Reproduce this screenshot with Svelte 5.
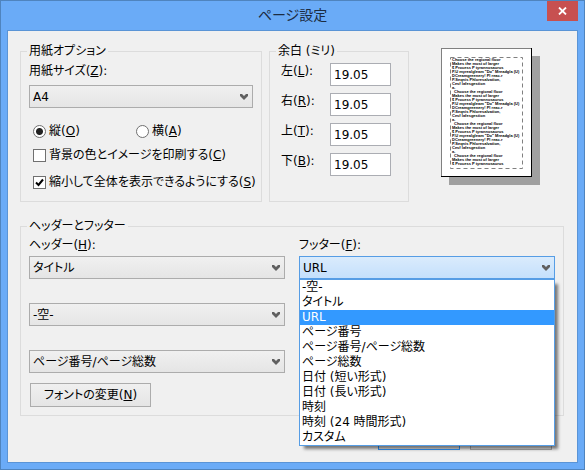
<script>
    let paper = $state('A4');
    let orientation = $state('portrait');
    let printBackground = $state(false);
    let shrinkToFit = $state(true);

    const parts = ['-空-', 'タイトル', 'URL', 'ページ番号', 'ページ番号/ページ総数', 'ページ総数',
        '日付 (短い形式)', '日付 (長い形式)', '時刻', '時刻 (24 時間形式)', 'カスタム'];

    let margins = $state([
        { id: 'left', name: '左', key: 'L', value: '19.05' },
        { id: 'right', name: '右', key: 'R', value: '19.05' },
        { id: 'top', name: '上', key: 'T', value: '19.05' },
        { id: 'bottom', name: '下', key: 'B', value: '19.05' }
    ]);

    let headers = $state(['タイトル', '-空-', 'ページ番号/ページ総数']);
    let footer = $state('URL');
    let footerOpen = $state(true);

    // dummy text of the page preview
    const sample = ['Choose the regional floor', 'Makes the most of larger', '$ Process P tyrannosaurus', 'P.U myrealgleam "Do" Mreadgla (U)',
        'DCreamgreenery! Pl reac.r', 'P.Seqnis Phloresalvation,', 'Cesf lafesgestion', 'a.'];
    const lines = Array.from({ length: 27 }, (_, i) => sample[i % 8]);

    function toggleFooter(e) {
        e.preventDefault();
        footerOpen = !footerOpen;
    }

    function pickFooter(part) {
        footer = part;
        footerOpen = false;
    }
</script>

<div class="window">
    <header class="titlebar">
        <h1>ページ設定</h1>
        <button class="close" aria-label="閉じる">
            <svg width="9" height="8" viewBox="0 0 9 8"><path d="M1 0.5L8 7.5M8 0.5L1 7.5" stroke="#fff" stroke-width="1.8" /></svg>
        </button>
    </header>

    <main class="client">
        <div class="top-row">
            <fieldset>
                <legend>用紙オプション</legend>
                <label class="caption" for="paper">用紙サイズ(<u>Z</u>):</label>
                <select id="paper" class="paper" bind:value={paper}>
                    <option>A4</option>
                </select>
                <div class="radios">
                    <label class="choice"><input type="radio" name="orientation" value="portrait" bind:group={orientation}><span>縦(<u>O</u>)</span></label>
                    <label class="choice"><input type="radio" name="orientation" value="landscape" bind:group={orientation}><span>横(<u>A</u>)</span></label>
                </div>
                <div class="checks">
                    <label class="choice"><input type="checkbox" bind:checked={printBackground}><span>背景の色とイメージを印刷する(<u>C</u>)</span></label>
                    <label class="choice"><input type="checkbox" bind:checked={shrinkToFit}><span>縮小して全体を表示できるようにする(<u>S</u>)</span></label>
                </div>
            </fieldset>

            <fieldset class="margins">
                <legend>余白 (ミリ)</legend>
                <div class="margin-grid">
                    {#each margins as m}
                        <label for={m.id}>{m.name}(<u>{m.key}</u>):</label>
                        <input id={m.id} type="text" bind:value={m.value}>
                    {/each}
                </div>
            </fieldset>

            <div class="preview">
                <svg width="99" height="137" viewBox="0 0 99 137">
                    <rect x="8" y="8" width="91" height="129" fill="#a0a0a0" />
                    <rect width="91" height="129" fill="#000" />
                    <rect width="90" height="128" fill="#808080" />
                    <rect x="1" y="1" width="89" height="127" fill="#fff" />
                    <rect x="9.5" y="9.5" width="72" height="111" fill="none" stroke="#808080" stroke-dasharray="4 3" />
                    {#each lines as line, i}
                        <text x={i > 0 && i % 8 === 0 ? 13 : 11} y={13 + i * 4}>{line}</text>
                    {/each}
                </svg>
            </div>
        </div>

        <fieldset class="header-footer">
            <legend>ヘッダーとフッター</legend>
            <div class="columns">
                <div class="column">
                    <label class="caption" for="header0">ヘッダー(<u>H</u>):</label>
                    <div class="stack">
                        {#each headers as header, i}
                            <select id="header{i}" aria-label={i > 0 ? 'ヘッダー' : undefined} bind:value={headers[i]}>
                                {#each parts as part}
                                    <option>{part}</option>
                                {/each}
                            </select>
                        {/each}
                    </div>
                    <button class="btn font-btn">フォントの変更(<u>N</u>)</button>
                </div>
                <div class="column">
                    <label class="caption" for="footer">フッター(<u>F</u>):</label>
                    <div class="dropdown">
                        <select id="footer" class:open={footerOpen} bind:value={footer} onmousedown={toggleFooter}>
                            {#each parts as part}
                                <option>{part}</option>
                            {/each}
                        </select>
                        {#if footerOpen}
                            <ul class="list" role="listbox" aria-label="フッター">
                                {#each parts as part}
                                    <li role="option" aria-selected={part === footer}>
                                        <button class:selected={part === footer} onclick={() => pickFooter(part)}>{part}</button>
                                    </li>
                                {/each}
                            </ul>
                        {/if}
                    </div>
                </div>
            </div>
        </fieldset>

        <div class="actions">
            <button class="btn default">OK</button>
            <button class="btn">キャンセル</button>
        </div>
    </main>
</div>

<style>
    :global(body) {
        margin: 0;
    }

    .window, .window button, .window input, .window select {
        font-family: "DejaVu Sans", "Noto Sans CJK JP", sans-serif;
        font-size: 12px;
        line-height: 16px;
        font-feature-settings: "palt";
        color: #000;
    }

    .window, .window * {
        box-sizing: border-box;
    }

    .window {
        display: flex;
        flex-direction: column;
        min-height: 100vh;
        padding: 0 6px 6px;
        border: 1px solid #4f84be;
        background: #6aabf7;
    }

    .titlebar {
        display: grid;
        grid-template-columns: 31px 1fr 31px;
        height: 29px;
    }

    h1 {
        grid-column: 2;
        margin: 0;
        font-size: 14px;
        font-weight: 400;
        line-height: 29px;
        text-align: center;
        color: #1c2c42;
    }

    .close {
        display: flex;
        align-items: center;
        justify-content: center;
        height: 20px;
        padding: 0;
        border: none;
        background: #c75050;
    }

    .client {
        flex: 1;
        padding: 12px 13px 12px 12px;
        border: 1px solid #5a94d6;
        background: #f0f0f0;
    }

    .top-row {
        display: grid;
        grid-template-columns: 1fr 140px 148px;
        gap: 7px;
    }

    fieldset {
        min-width: 0;
        margin: 0;
        padding: 4px 8px 11px;
        border: 1px solid #dcdcdc;
    }

    legend {
        margin-left: -2px;
        padding: 0 2px;
    }

    .caption {
        display: block;
        white-space: nowrap;
    }

    select {
        display: block;
        width: 100%;
        height: 23px;
        padding: 0 20px 0 3px;
        border: 1px solid #acacac;
        border-radius: 0;
        outline: none;
        appearance: none;
        background: url("data:image/svg+xml,%3Csvg xmlns='http://www.w3.org/2000/svg' width='8' height='6'%3E%3Cpath d='M0 0h2l2 2 2-2h2v2L4 6 0 2z' fill='%23606060'/%3E%3C/svg%3E") no-repeat right 4px center, linear-gradient(#f0f0f0, #e5e5e5);
    }

    select.open {
        border-color: #569de5;
        background: url("data:image/svg+xml,%3Csvg xmlns='http://www.w3.org/2000/svg' width='8' height='6'%3E%3Cpath d='M0 0h2l2 2 2-2h2v2L4 6 0 2z' fill='%23606060'/%3E%3C/svg%3E") no-repeat right 4px center, linear-gradient(#daebfc, #c4e0fc);
    }

    .paper {
        margin-top: 6px;
    }

    .radios {
        display: grid;
        grid-template-columns: 103px 1fr;
        margin: 15px 0 8px 4px;
    }

    .checks {
        display: grid;
        gap: 11px;
        margin-left: 4px;
    }

    .choice {
        display: flex;
        align-items: center;
        gap: 3px;
        white-space: nowrap;
    }

    .choice input {
        flex: none;
        width: 13px;
        height: 13px;
        margin: 0;
        border: 1px solid #707070;
        appearance: none;
        background: #fff;
    }

    .choice input[type="radio"] {
        border-radius: 50%;
    }

    .choice input[type="radio"]:checked {
        background: radial-gradient(circle, #222 3px, #fff 4px);
    }

    .choice input[type="checkbox"]:checked {
        background: #fff url("data:image/svg+xml,%3Csvg xmlns='http://www.w3.org/2000/svg' width='9' height='9'%3E%3Cpath d='M1 4.5L3.5 7 8 1.5' fill='none' stroke='%23000' stroke-width='2'/%3E%3C/svg%3E") no-repeat center;
    }

    .margins {
        padding: 4px 17px 8px 11px;
    }

    .margins legend {
        margin-left: -5px;
    }

    .margin-grid {
        display: grid;
        grid-template-columns: 1fr 61px;
        row-gap: 7px;
    }

    .margin-grid input {
        width: 100%;
        height: 23px;
        padding: 0 3px;
        border: 1px solid #abadb3;
        background: #fff;
    }

    .preview {
        padding: 5px 0 0 25px;
    }

    .preview svg {
        display: block;
    }

    .preview text {
        font-family: "Liberation Sans", sans-serif;
        font-size: 4px;
        font-weight: 700;
    }

    .header-footer {
        margin-top: 16px;
        padding: 3px 8px 8px;
    }

    .columns {
        display: grid;
        grid-template-columns: 1fr 1fr;
        gap: 14px;
    }

    .stack {
        display: grid;
        gap: 24px;
        margin-top: 3px;
    }

    .btn {
        width: 82px;
        height: 24px;
        padding: 0;
        border: 1px solid #acacac;
        background: linear-gradient(#f0f0f0, #e5e5e5);
    }

    .font-btn {
        width: 121px;
        margin: 10px 0 0 1px;
    }

    .default {
        border-color: #3399ff;
    }

    .dropdown {
        position: relative;
        margin-top: 3px;
    }

    .list {
        position: absolute;
        top: 100%;
        left: 0;
        right: 0;
        margin: 0;
        padding: 0;
        list-style: none;
        border: 1px solid #569de5;
        background: #fff;
        box-shadow: 4px 4px 3px -1px rgba(0, 0, 0, 0.5);
    }

    .list button {
        display: block;
        width: 100%;
        height: 15px;
        padding: 0 2px;
        border: none;
        background: none;
        line-height: 15px;
        text-align: left;
    }

    .list .selected {
        background: #3399ff;
        color: #fff;
    }

    .actions {
        display: flex;
        justify-content: flex-end;
        gap: 10px;
        margin: 10px 12px 0 0;
    }
</style>
